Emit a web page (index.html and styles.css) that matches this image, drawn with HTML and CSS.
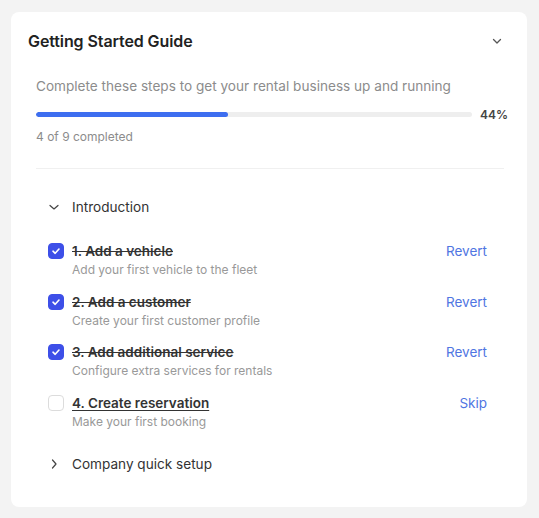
FILE: index.html
```html
<!DOCTYPE html>
<html lang="en">
<head>
    <meta charset="UTF-8">
    <meta name="viewport" content="width=device-width, initial-scale=1.0">
    <title>Getting Started Guide</title>
    <link rel="stylesheet" href="styles.css">
</head>
<body>
    <div class="card">
        <div class="card-header">
            <h2>Getting Started Guide</h2>
            <svg class="chevron" width="12" height="12" viewBox="0 0 12 12"><path d="M2.5 4.5 L6 8 L9.5 4.5" fill="none" stroke="#555" stroke-width="1.3" stroke-linecap="round" stroke-linejoin="round"/></svg>
        </div>

        <div class="card-body">
            <p class="intro-text">Complete these steps to get your rental business up and running</p>
            <div class="progress-row">
                <div class="progress-track">
                    <div class="progress-fill" style="width: 44%"></div>
                </div>
                <span class="progress-value">44%</span>
            </div>
            <p class="progress-count">4 of 9 completed</p>

            <div class="section">
                <div class="section-head">
                    <svg width="12" height="12" viewBox="0 0 12 12"><path d="M2 4.5 L6 8 L10 4.5" fill="none" stroke="#444" stroke-width="1.2" stroke-linecap="round" stroke-linejoin="round"/></svg>
                    <span>Introduction</span>
                </div>

                <div class="steps">
                    <div class="step done">
                        <span class="check"><svg width="10" height="10" viewBox="0 0 10 10"><path d="M2 5.2 L4.2 7.3 L8 3" fill="none" stroke="#fff" stroke-width="1.6" stroke-linecap="round" stroke-linejoin="round"/></svg></span>
                        <div class="step-text">
                            <div class="step-title">1. Add a vehicle</div>
                            <div class="step-desc">Add your first vehicle to the fleet</div>
                        </div>
                        <a class="step-action">Revert</a>
                    </div>
                    <div class="step done">
                        <span class="check"><svg width="10" height="10" viewBox="0 0 10 10"><path d="M2 5.2 L4.2 7.3 L8 3" fill="none" stroke="#fff" stroke-width="1.6" stroke-linecap="round" stroke-linejoin="round"/></svg></span>
                        <div class="step-text">
                            <div class="step-title">2. Add a customer</div>
                            <div class="step-desc">Create your first customer profile</div>
                        </div>
                        <a class="step-action">Revert</a>
                    </div>
                    <div class="step done">
                        <span class="check"><svg width="10" height="10" viewBox="0 0 10 10"><path d="M2 5.2 L4.2 7.3 L8 3" fill="none" stroke="#fff" stroke-width="1.6" stroke-linecap="round" stroke-linejoin="round"/></svg></span>
                        <div class="step-text">
                            <div class="step-title">3. Add additional service</div>
                            <div class="step-desc">Configure extra services for rentals</div>
                        </div>
                        <a class="step-action">Revert</a>
                    </div>
                    <div class="step">
                        <span class="check"></span>
                        <div class="step-text">
                            <div class="step-title">4. Create reservation</div>
                            <div class="step-desc">Make your first booking</div>
                        </div>
                        <a class="step-action">Skip</a>
                    </div>
                </div>

                <div class="section-head collapsed">
                    <svg width="12" height="12" viewBox="0 0 12 12"><path d="M4.5 2 L8 6 L4.5 10" fill="none" stroke="#444" stroke-width="1.2" stroke-linecap="round" stroke-linejoin="round"/></svg>
                    <span>Company quick setup</span>
                </div>
            </div>
        </div>
    </div>
</body>
</html>
```

FILE: styles.css
```css
body {
    font-family: Inter, "Noto Sans", sans-serif;
    background-color: #f3f3f3;
    margin: 0;
    padding: 12px 12px 11px 11px;
}

.card {
    background-color: white;
    border-radius: 8px;
    width: 516px;
    height: 495px;
    box-sizing: border-box;
    padding: 19px 0 0 0;
}

.card-header {
    display: flex;
    justify-content: space-between;
    align-items: center;
    padding: 0 24px 0 17px;
    height: 20px;
}

h2 {
    margin: 0;
    font-size: 16px;
    font-weight: 600;
    color: #222;
    letter-spacing: -0.1px;
}

.card-body {
    padding: 25px 23px 0 25px;
}

.intro-text {
    margin: 0;
    font-size: 13.6px;
    line-height: 20px;
    color: #8c8c8c;
}

.progress-row {
    display: flex;
    align-items: center;
    gap: 8px;
    margin-top: 10px;
    height: 17px;
    margin-right: -4px;
}

.progress-track {
    flex: 1;
    height: 5px;
    background-color: #eeeeee;
    border-radius: 3px;
    overflow: hidden;
}

.progress-fill {
    height: 100%;
    background-color: #3d6ef0;
    border-radius: 3px;
}

.progress-value {
    font-size: 12px;
    font-weight: 600;
    color: #444;
}

.progress-count {
    margin: 6px 0 0 0;
    font-size: 12px;
    line-height: 16px;
    color: #8c8c8c;
    padding-bottom: 23px;
    border-bottom: 1px solid #f0f0f0;
}

.section {
    padding: 28px 17px 0 12px;
}

.section-head {
    display: flex;
    align-items: center;
    gap: 12px;
    height: 20px;
    font-size: 13.6px;
    color: #333;
}

.section-head.collapsed {
    margin-top: 24px;
}

.steps {
    display: flex;
    flex-direction: column;
    gap: 14.5px;
    margin-top: 25px;
}

.step {
    display: flex;
    align-items: flex-start;
    gap: 8px;
}

.check {
    width: 16px;
    height: 16px;
    margin-top: 1px;
    box-sizing: border-box;
    border: 1px solid #dcdcdc;
    border-radius: 4px;
    display: flex;
    align-items: center;
    justify-content: center;
}

.step.done .check {
    background-color: #3d4fe8;
    border-color: #3d4fe8;
}

.step-text {
    flex: 1;
}

.step-title {
    font-size: 13.5px;
    font-weight: 600;
    line-height: 18px;
    color: #333;
    text-decoration: underline;
    text-underline-offset: 2px;
}

.step.done .step-title {
    text-decoration: line-through;
}

.step-desc {
    font-size: 12px;
    line-height: 16px;
    margin-top: 2px;
    color: #999;
}

.step-action {
    font-size: 13.5px;
    line-height: 18px;
    color: #5075e2;
    cursor: pointer;
}
```
